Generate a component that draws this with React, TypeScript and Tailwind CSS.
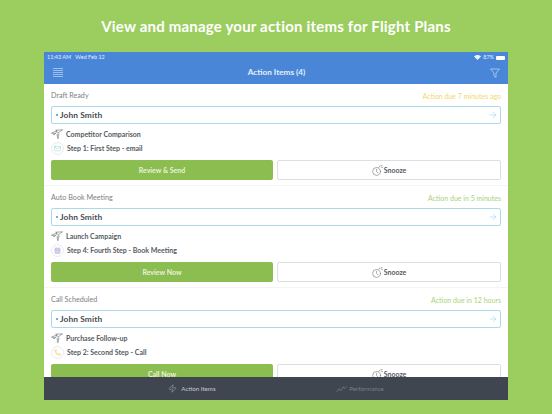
import React from "react";
import { ArrowRight, Calendar, Mail, Phone, Zap } from "lucide-react";

const font = { fontFamily: "Lato, sans-serif" };

const PlanesIcon = () => (
  <svg width="12" height="11" viewBox="0 0 14 12" fill="none" stroke="#6a7077" strokeWidth="0.7" strokeLinejoin="round">
    <path d="M0.5 4.5 L7 1.5 L5.5 4.8 Z" />
    <path d="M5.5 4.8 L3.2 6.6 L3 5" />
    <path d="M5.5 1 L13.5 0.5 L8.5 4 L7.5 2.8 Z" />
    <path d="M8.5 4 L8 7 L10 5.8" />
    <path d="M7 6 L8 11 L9 7" />
  </svg>
);

const SnoozeIcon = () => (
  <svg width="11" height="11" viewBox="0 0 12 12" fill="none" stroke="#777c82" strokeWidth="0.7" strokeLinecap="round">
    <circle cx="5" cy="7" r="4.3" />
    <path d="M5 4.6 V7 L6.6 8.6" />
    <path d="M7.4 2.6 L8.4 1.4 M9.6 0.8 L11 0.5 M10 2.4 L11.4 2.6" />
  </svg>
);

const TrendIcon = () => (
  <svg width="11" height="8" viewBox="0 0 12 8" fill="none" stroke="#6f7a70" strokeWidth="0.9">
    <path d="M0.5 7.5 L3.5 3.5 L5 6 L8 1.5 L9 3.5 L11.5 0.8" />
  </svg>
);

const ActionItem = ({ label, due, dueClass, campaign, step, stepIcon, action }: any) => (
  <div className="flex flex-col h-[102px] shrink-0 px-[7px] border-b border-[#f3f4f3]">
    <div className="flex justify-between items-center h-[22px] pt-[2px] text-[7.2px] text-[#7b7f84]">
      <span>{label}</span>
      <span className={`text-[7px] ${dueClass}`}>{due}</span>
    </div>
    <div className="flex items-center h-[18px] shrink-0 rounded-[2px] border border-[#aad9ec] pl-[3.5px] pr-[2px]">
      <span className="w-[2.5px] h-[2.5px] rounded-full bg-[#3f97d0] mr-[2px]" />
      <span className="flex-1 text-[8.4px] font-bold text-[#464c53] tracking-[0.1px]">John Smith</span>
      <ArrowRight size={10} strokeWidth={1.2} color="#8fcaea" />
    </div>
    <div className="flex items-center gap-[3px] h-[14px] mt-[3px] text-[7px] font-bold text-[#555b62]">
      <PlanesIcon />
      <span>{campaign}</span>
    </div>
    <div className="flex items-center gap-[3px] h-[14px] text-[7px] font-bold text-[#555b62]">
      <span className="flex justify-center items-center w-[13px] h-[13px] rounded-full border border-[#e9ecea]">
        {stepIcon}
      </span>
      <span>{step}</span>
    </div>
    <div className="flex gap-[4px] mt-[5px]">
      <button className="flex-1 h-[20px] flex justify-center items-center rounded-[2px] bg-[#8bbd50] text-[7px] font-bold text-[#e8f3da]">
        {action}
      </button>
      <button className="flex-1 h-[20px] flex justify-center items-center gap-[1px] rounded-[2px] border border-[#dcdedf] bg-white text-[7px] font-bold text-[#555b63]">
        <SnoozeIcon />
        Snooze
      </button>
    </div>
  </div>
);

export default function App() {
  return (
    <div className="flex flex-col items-center w-[552px] h-[414px] bg-[#9bce5f] overflow-hidden" style={font}>
      <div className="flex justify-center items-center h-[52px] text-[15px] font-bold tracking-[0.2px] text-white">
        View and manage your action items for Flight Plans
      </div>
      <div className="flex flex-col w-[464px] h-[348px] bg-white">
        <div className="h-[32px] shrink-0 bg-[#4a86d8] text-white">
          <div className="flex justify-between items-center h-[10px] px-[3px] pt-[1px] text-[5.5px] text-[#e4edf9]">
            <span>11:43 AM&nbsp;&nbsp; Wed Feb 12</span>
            <span className="flex items-center gap-[2px]">
              <svg width="7" height="5" viewBox="0 0 7 5" fill="#eef4fc">
                <path d="M0 1.6 C2 -0.4 5 -0.4 7 1.6 L3.5 5 Z" />
              </svg>
              87%
              <span className="w-[9px] h-[4px] rounded-[1px] bg-white" />
            </span>
          </div>
          <div className="flex justify-between items-center h-[21px] pl-[9px] pr-[8px]">
            <svg width="10" height="9" viewBox="0 0 10 9" stroke="#c3d7f3" strokeWidth="0.7">
              <path d="M0 0.5 H10 M0 2.5 H10 M0 4.5 H10 M0 6.5 H10 M0 8.5 H10" />
            </svg>
            <span className="text-[8.2px] font-bold text-[#e6effb]">Action Items (4)</span>
            <svg width="10" height="10" viewBox="0 0 10 10" fill="none" stroke="#c5d8f2" strokeWidth="0.7">
              <path d="M0.5 1 H9.5 L6 5 V9.5 L4 8 V5 Z" />
            </svg>
          </div>
        </div>
        <div className="flex flex-col flex-1 overflow-hidden">
          <ActionItem
            label="Draft Ready"
            due="Action due 7 minutes ago"
            dueClass="text-[#f2d86a]"
            campaign="Competitor Comparison"
            step="Step 1: First Step - email"
            stepIcon={<Mail size={7} strokeWidth={1.2} color="#68c8c0" />}
            action="Review & Send"
          />
          <ActionItem
            label="Auto Book Meeting"
            due="Action due in 5 minutes"
            dueClass="text-[#a9d27a]"
            campaign="Launch Campaign"
            step="Step 4: Fourth Step - Book Meeting"
            stepIcon={<Calendar size={7} strokeWidth={1} color="#a795d8" fill="#d8cfee" />}
            action="Review Now"
          />
          <ActionItem
            label="Call Scheduled"
            due="Action due in 12 hours"
            dueClass="text-[#a9d27a]"
            campaign="Purchase Follow-up"
            step="Step 2: Second Step - Call"
            stepIcon={<Phone size={7} strokeWidth={1} color="#f0d98a" fill="#f6e7b0" />}
            action="Call Now"
          />
        </div>
        <div className="flex justify-center shrink-0 h-[23px] bg-[#3f4650] text-[6.2px]">
          <div className="flex w-[168px] justify-center items-center gap-[4px] text-[#c5c9cd]">
            <Zap size={9} strokeWidth={1} color="#d5d8db" />
            <span>Action Items</span>
          </div>
          <div className="flex w-[168px] justify-center items-center gap-[2px] text-[#7a8087]">
            <TrendIcon />
            <span>Performance</span>
          </div>
        </div>
      </div>
    </div>
  );
}
